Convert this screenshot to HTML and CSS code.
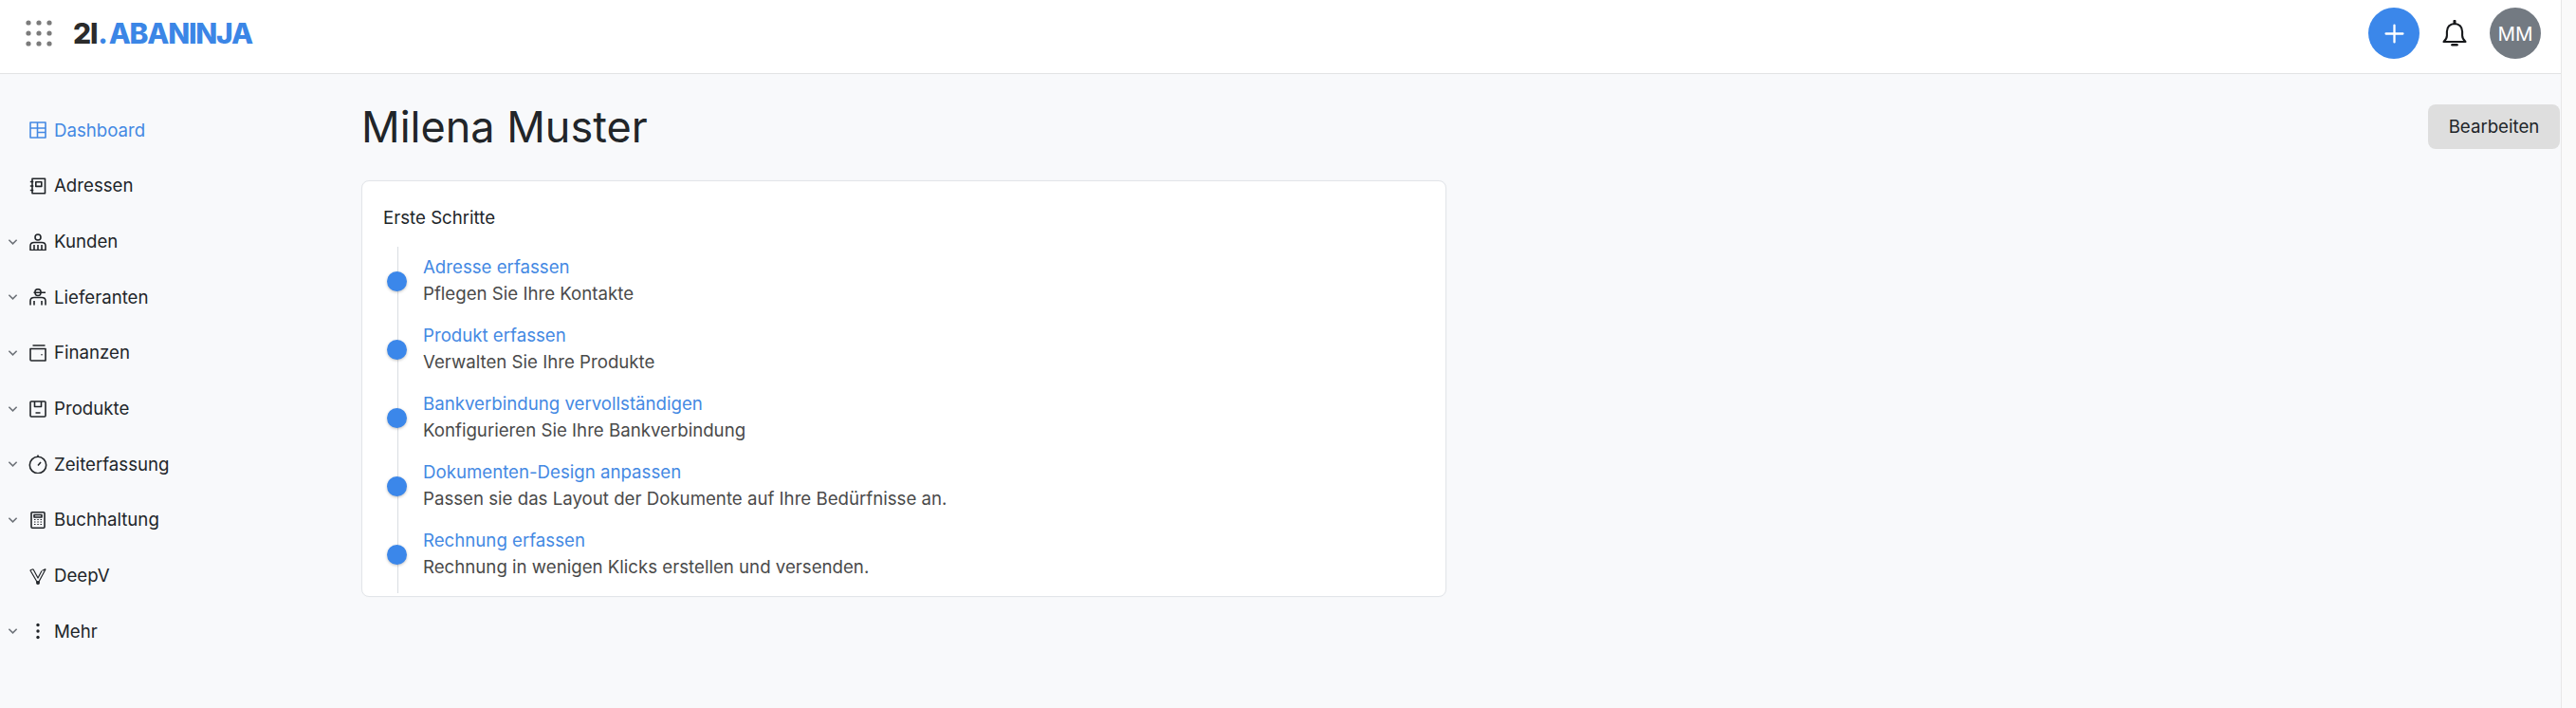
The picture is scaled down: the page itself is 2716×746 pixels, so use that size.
FILE: index.html
```html
<!DOCTYPE html>
<html lang="de">
<head>
<meta charset="utf-8">
<title>Milena Muster</title>
<link rel="stylesheet" href="styles.css">
</head>
<body>
<div class="app">
  <header class="topbar">
    <div class="brand">
      <svg class="apps" viewBox="0 0 28 28" fill="#7b7b7b"><circle cx="3" cy="3" r="2.6"/><circle cx="14" cy="3" r="2.6"/><circle cx="25" cy="3" r="2.6"/><circle cx="3" cy="14" r="2.6"/><circle cx="14" cy="14" r="2.6"/><circle cx="25" cy="14" r="2.6"/><circle cx="3" cy="25" r="2.6"/><circle cx="14" cy="25" r="2.6"/><circle cx="25" cy="25" r="2.6"/></svg>
      <span class="logo"><span class="logo-dark">2I</span><span class="logo-dot">.</span>ABANINJA</span>
    </div>
    <div class="actions">
      <button class="add" aria-label="Neu"><svg viewBox="0 0 20 20" fill="none" stroke="#fff" stroke-width="2.200" stroke-linecap="round"><path d="M10 1.500v17M1.500 10h17"/></svg></button>
      <svg class="bell" viewBox="0 0 26 28" fill="none" stroke="#16181b" stroke-width="2.100" stroke-linejoin="round" stroke-linecap="round"><path d="M1.500 23h23c-2-1.800-3.400-3.400-3.400-6.500v-4.200c0-4.800-3.300-8.300-8.100-8.300S4.900 7.500 4.900 12.300v4.200c0 3.100-1.400 4.700-3.400 6.500z"/><path d="M13 1.200v2.600" stroke-width="3"/><path d="M10.500 26.200h5" stroke-width="2.600"/></svg>
      <div class="avatar">MM</div>
    </div>
  </header>
  <div class="body">
    <nav class="sidebar">
      <a class="item active"><span class="chev"></span>
        <svg class="ico" viewBox="0 0 18 18"><path d="M1 1h16v16H1zM8.500 1v16M8.500 7H17M8.500 11.500H17M1 7h7.500"/></svg>
        <span>Dashboard</span></a>
      <a class="item"><span class="chev"></span>
        <svg class="ico" viewBox="0 0 18 18"><path d="M3 1.200h13.500v15.600H3zM.8 4.500h3.500M.8 9h3.500M.8 13.500h3.500M6.800 4.800h6v4.600h-6z"/></svg>
        <span>Adressen</span></a>
      <a class="item"><svg class="chev" viewBox="0 0 12 8"><path d="M1.500 1.500 6 6l4.500-4.500"/></svg>
        <svg class="ico" viewBox="0 0 18 18"><circle cx="9" cy="4" r="3"/><path d="M1 17.500V13c0-2.200 1.800-3.500 4-3.500h8c2.200 0 4 1.300 4 3.500v4.500zM5 12v5.500M9 12v5.500M13 12v5.500"/></svg>
        <span>Kunden</span></a>
      <a class="item"><svg class="chev" viewBox="0 0 12 8"><path d="M1.500 1.500 6 6l4.500-4.500"/></svg>
        <svg class="ico" viewBox="0 0 18 18"><path d="M6 4.200V3c0-1.400 1.300-2.300 3-2.300s3 .9 3 2.300v1.200zM4.500 4.200H17M6 4.200c0 2 1.300 3.300 3 3.300s3-1.300 3-3.300"/><path d="M1 17.500V13c0-2.200 1.800-3.500 4-3.500h8c2.200 0 4 1.300 4 3.500v4.500M5 13v4.500M13 13v4.500"/></svg>
        <span>Lieferanten</span></a>
      <a class="item"><svg class="chev" viewBox="0 0 12 8"><path d="M1.500 1.500 6 6l4.500-4.500"/></svg>
        <svg class="ico" viewBox="0 0 18 18"><path d="M3.500 1h13M1 16V4.500h16V17H2a1 1 0 0 1-1-1z"/><circle class="dot" cx="13" cy="10.800" r=".8"/></svg>
        <span>Finanzen</span></a>
      <a class="item"><svg class="chev" viewBox="0 0 12 8"><path d="M1.500 1.500 6 6l4.500-4.500"/></svg>
        <svg class="ico" viewBox="0 0 18 18"><path d="M2 1h14a1 1 0 0 1 1 1v14a1 1 0 0 1-1 1H2a1 1 0 0 1-1-1V2a1 1 0 0 1 1-1zM5.500 1v5.500h7V1M6.500 13h5"/></svg>
        <span>Produkte</span></a>
      <a class="item"><svg class="chev" viewBox="0 0 12 8"><path d="M1.500 1.500 6 6l4.500-4.500"/></svg>
        <svg class="ico ico-lg" viewBox="0 0 20 20"><circle cx="10" cy="11" r="8.700"/><path d="M10 .5v1.800M10 11.500l3-3.500"/></svg>
        <span>Zeiterfassung</span></a>
      <a class="item"><svg class="chev" viewBox="0 0 12 8"><path d="M1.500 1.500 6 6l4.500-4.500"/></svg>
        <svg class="ico" viewBox="0 0 18 18"><path d="M3 .8h12a1 1 0 0 1 1 1v14.400a1 1 0 0 1-1 1H3a1 1 0 0 1-1-1V1.800a1 1 0 0 1 1-1zM5 3.500h8v2.500H5z"/><path class="thin" d="M5 8.500h1.500M8.300 8.500h1.500M11.500 8.500H13M5 11h1.500M8.300 11h1.500M11.500 11H13M5 13.500h1.500M8.300 13.500h1.500M11.500 13.500H13"/></svg>
        <span>Buchhaltung</span></a>
      <a class="item"><span class="chev"></span>
        <svg class="ico" viewBox="0 0 18 18"><path class="thin" d="M.8 2.800 9 16.800 17.200 1.500M4 1.800 9 11l4-7.500M.8 2.800 4 1.800M17.200 1.500l-3.700 1.800"/><circle cx="9" cy="16" r="1.200"/></svg>
        <span>DeepV</span></a>
      <a class="item"><svg class="chev" viewBox="0 0 12 8"><path d="M1.500 1.500 6 6l4.500-4.500"/></svg>
        <svg class="ico" viewBox="0 0 18 18"><circle class="dot" cx="9" cy="2.500" r="1.700"/><circle class="dot" cx="9" cy="9" r="1.700"/><circle class="dot" cx="9" cy="15.500" r="1.700"/></svg>
        <span>Mehr</span></a>
    </nav>
    <main class="content">
      <div class="title-row">
        <h1>Milena Muster</h1>
        <button class="edit">Bearbeiten</button>
      </div>
      <section class="card">
        <h2>Erste Schritte</h2>
        <ul class="steps">
          <li><span class="bullet"></span><div><a>Adresse erfassen</a><p>Pflegen Sie Ihre Kontakte</p></div></li>
          <li><span class="bullet"></span><div><a>Produkt erfassen</a><p>Verwalten Sie Ihre Produkte</p></div></li>
          <li><span class="bullet"></span><div><a>Bankverbindung vervollständigen</a><p>Konfigurieren Sie Ihre Bankverbindung</p></div></li>
          <li><span class="bullet"></span><div><a>Dokumenten-Design anpassen</a><p>Passen sie das Layout der Dokumente auf Ihre Bedürfnisse an.</p></div></li>
          <li><span class="bullet"></span><div><a>Rechnung erfassen</a><p>Rechnung in wenigen Klicks erstellen und versenden.</p></div></li>
        </ul>
      </section>
    </main>
  </div>
</div>
<div class="scrollbar"></div>
</body>
</html>
```
FILE: styles.css
```css
* { box-sizing: border-box; }
html, body { margin: 0; height: 100%; overflow: hidden; }
body { display: flex; font-family: Inter, "Liberation Sans", sans-serif; font-size: 18.67px; color: #212529; background: #f8f9fb; }
.app { flex: 1; min-width: 0; display: flex; flex-direction: column; }
.scrollbar { width: 16px; background: #fafafa; border-left: 1px solid #e8e8e8; }

.topbar { height: 78px; flex: none; display: flex; align-items: center; justify-content: space-between; background: #fff; border-bottom: 1px solid #e2e3e5; padding: 0 21px 7px 27px; }
.brand { display: flex; align-items: center; gap: 22px; }
.apps { width: 28px; height: 28px; }
.logo { font-size: 30px; font-weight: 800; letter-spacing: -1.2px; color: #3b86e6; line-height: 1; }
.logo-dark { color: #2b2b2b; }
.logo-dot { margin: 0 2px 0 1px; }
.actions { display: flex; align-items: center; }
.add { width: 54px; height: 54px; border: 0; border-radius: 50%; padding: 0; background: #3b87ea; display: flex; align-items: center; justify-content: center; }
.add svg { width: 21px; height: 21px; }
.bell { width: 26px; height: 28px; margin: 0 24px; }
.avatar { width: 54px; height: 54px; border-radius: 50%; background: #737a82; color: #fff; display: flex; align-items: center; justify-content: center; font-size: 20.500px; }

.body { flex: 1; display: flex; min-height: 0; }
.sidebar { width: 381px; flex: none; padding-top: 30px; display: flex; flex-direction: column; }
.item { height: 58.67px; display: flex; align-items: center; padding-left: 8px; color: #212529; }
.item.active { color: #4489e3; }
.chev { width: 11px; height: 8px; flex: none; margin-right: 12px; fill: none; stroke: #6d7278; stroke-width: 1.700; }
.ico { width: 18px; height: 18px; flex: none; margin-right: 8px; fill: none; stroke: currentColor; stroke-width: 1.600; stroke-linejoin: round; }
.ico-lg { width: 20px; height: 20px; margin: 0 7px 0 -1px; }
.ico .dot { fill: currentColor; stroke: none; }
.ico .thin { stroke-width: 1.200; }

.content { flex: 1; min-width: 0; padding: 32px 1px 0 0; }
.title-row { height: 47px; display: flex; align-items: center; justify-content: space-between; margin-bottom: 33px; }
h1 { margin: 0; font-size: 45px; font-weight: 400; line-height: 1; }
.edit { width: 139px; height: 47px; border: 0; border-radius: 8px; background: #dedede; color: #212529; font: inherit; padding: 0; }
.card { width: 1144px; height: 439px; background: #fff; border: 1px solid #e2e5e9; border-radius: 8px; padding: 26px 22px 0; box-shadow: 0 0 2px rgba(0,0,0,.03); }
h2 { margin: 0 0 17px; font-size: 18.67px; font-weight: 400; line-height: 26px; }
.steps { list-style: none; margin: 0; padding: 0; position: relative; }
.steps::before { content: ""; position: absolute; left: 15px; top: 0; height: 365px; width: 1px; background: #d9dde2; }
.steps li { height: 72px; display: flex; align-items: center; position: relative; padding-left: 4px; }
.bullet { width: 21px; height: 21px; border-radius: 50%; background: #3b87ea; box-shadow: 0 1px 3px rgba(0,0,0,.25); flex: none; margin-right: 17px; }
.steps a { display: block; color: #4489e3; line-height: 28px; }
.steps p { margin: 0; color: #4a4a4a; line-height: 28px; }
```
